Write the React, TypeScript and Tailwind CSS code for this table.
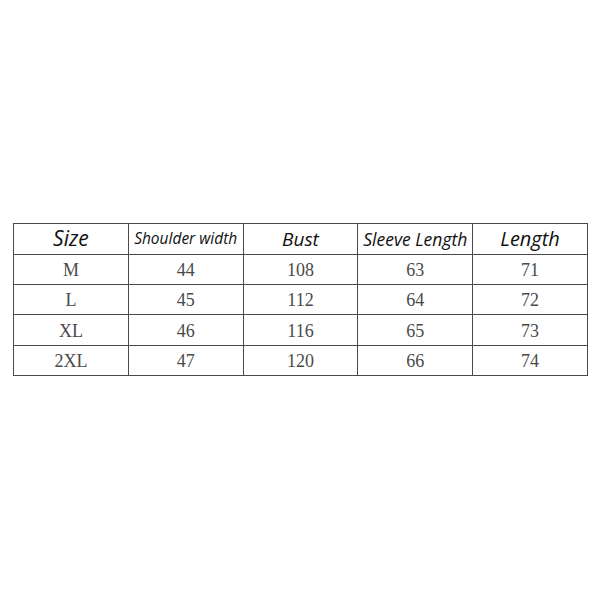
import React from "react";

const headers: { t: string; cls: string }[] = [
  { t: "Size", cls: "text-[21px]" },
  { t: "Shoulder width", cls: "text-[15.5px]" },
  { t: "Bust", cls: "text-[19px]" },
  { t: "Sleeve Length", cls: "text-[17.5px]" },
  { t: "Length", cls: "text-[20px]" },
];

const rows = [
  ["M", "44", "108", "63", "71"],
  ["L", "45", "112", "64", "72"],
  ["XL", "46", "116", "65", "73"],
  ["2XL", "47", "120", "66", "74"],
];

const rowH = ["h-[30px]", "h-[30px]", "h-[31px]", "h-[30px]"];

export default function App() {
  return (
    <div className="w-[600px] h-[600px] bg-white pt-[223px] pl-[13px]">
      <div className="w-[575px] border-l border-t border-[#4a4a4a]">
        <div className="grid grid-cols-5">
          {headers.map((h, i) => (
            <div
              key={i}
              className={`h-[31px] border-r border-b border-[#4a4a4a] flex items-center justify-center italic text-[#111] ${h.cls}`}
              style={{ fontFamily: '"Open Sans", "Noto Sans", sans-serif' }}
            >
              {h.t}
            </div>
          ))}
        </div>
        {rows.map((r, ri) => (
          <div key={ri} className="grid grid-cols-5">
            {r.map((c, ci) => (
              <div
                key={ci}
                className={`${rowH[ri]} border-r border-b border-[#4a4a4a] flex items-center justify-center pt-[2px] text-[18px] text-[#4a4a4a]`}
                style={{ fontFamily: '"Liberation Serif", "DejaVu Serif", serif' }}
              >
                {c}
              </div>
            ))}
          </div>
        ))}
      </div>
    </div>
  );
}
